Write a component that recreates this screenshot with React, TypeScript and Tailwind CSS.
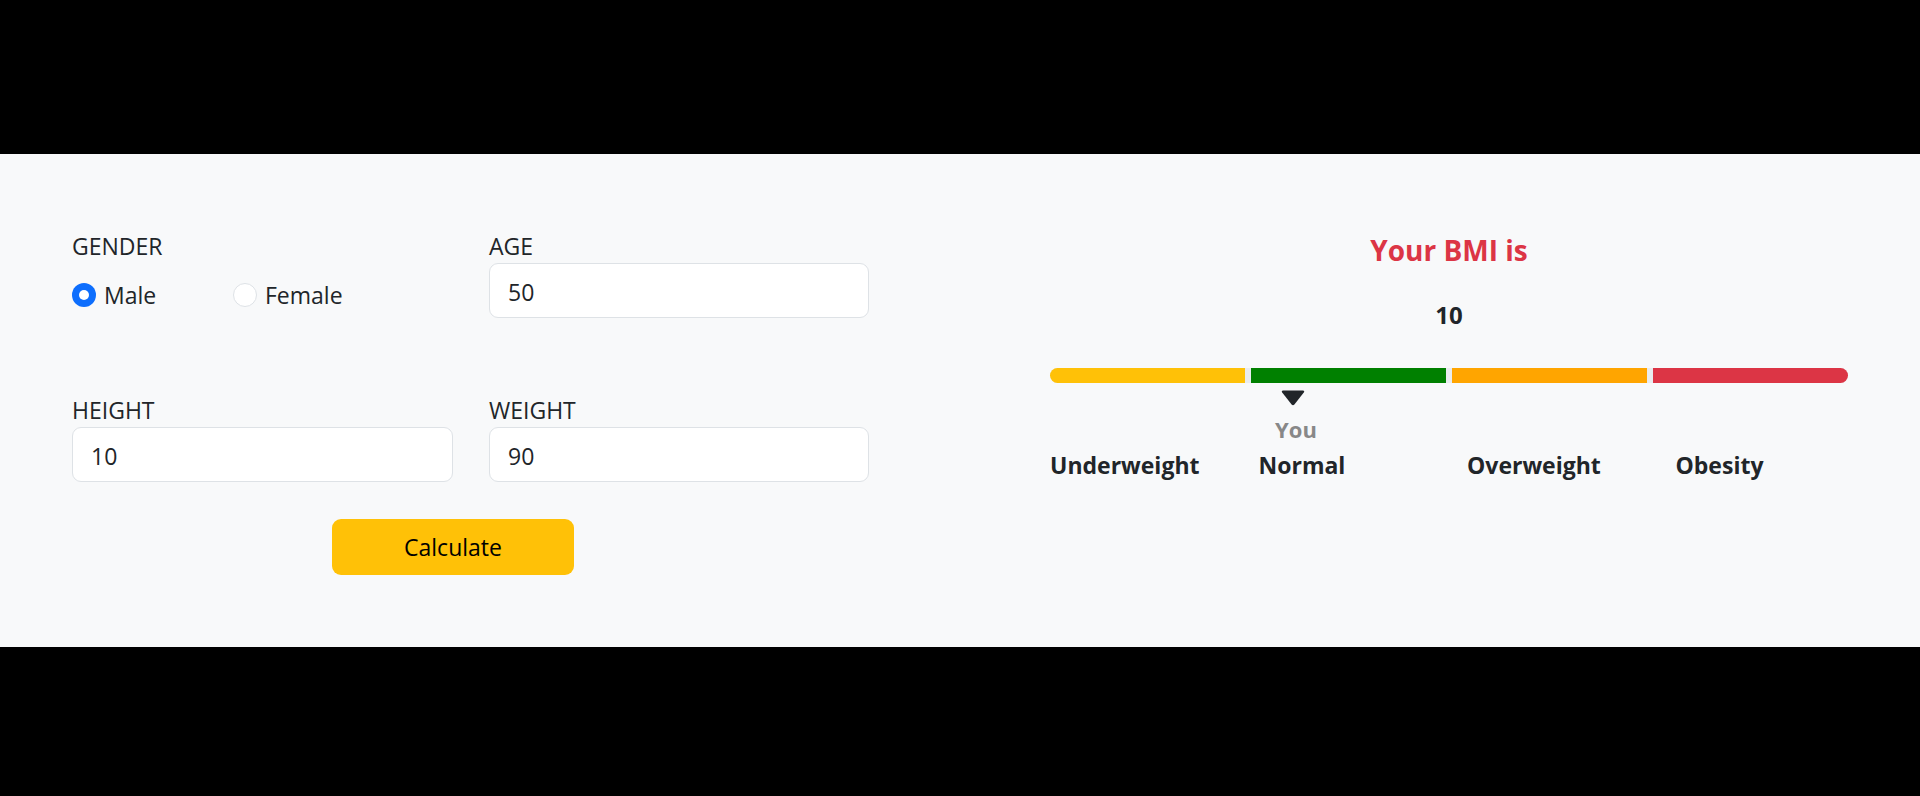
import { useState } from "react";

const SEGMENTS = [
  { key: "under", color: "bg-[#ffc107]", round: "rounded-l-full" },
  { key: "normal", color: "bg-[#008000]", round: "" },
  { key: "over", color: "bg-[#ffa500]", round: "" },
  { key: "obese", color: "bg-[#dc3545]", round: "rounded-r-full" },
];

const LABELS = ["Underweight", "Normal", "Overweight", "Obesity"];

function Radio({ checked, label, onSelect }: { checked: boolean; label: string; onSelect: () => void }) {
  return (
    <button type="button" onClick={onSelect} className="flex items-center gap-2 cursor-pointer">
      {checked ? (
        <span className="w-6 h-6 rounded-full bg-[#0d6efd] flex items-center justify-center">
          <span className="w-[10px] h-[10px] rounded-full bg-white" />
        </span>
      ) : (
        <span className="w-6 h-6 rounded-full bg-white border border-[#dee2e6]" />
      )}
      <span className="text-[23px] leading-[28px]">{label}</span>
    </button>
  );
}

function Field({ label, value, onChange }: { label: string; value: string; onChange: (v: string) => void }) {
  return (
    <div className="flex flex-col">
      <label className="text-[23px] leading-[28px]">{label}</label>
      <input
        value={value}
        onChange={(e) => onChange(e.target.value)}
        className="mt-[3px] h-[55px] w-full rounded-[9px] border border-[#dee2e6] bg-white px-[18px] pt-[2px] text-[23px] leading-[28px] text-[#212529] outline-none"
      />
    </div>
  );
}

export default function App() {
  const [gender, setGender] = useState<"male" | "female">("male");
  const [age, setAge] = useState("50");
  const [height, setHeight] = useState("10");
  const [weight, setWeight] = useState("90");

  return (
    <div
      className="h-[796px] bg-black pt-[154px] text-[#212529]"
      style={{ fontFamily: '"Open Sans", "Noto Sans", sans-serif' }}
    >
      <div className="bg-[#f8f9fa] px-[72px] pt-[78px] pb-[72px] flex justify-between items-start">
        {/* Form */}
        <div className="w-[797px]">
          <div className="grid grid-cols-[381px_380px] gap-x-[36px] gap-y-[78px]">
            <div className="flex flex-col">
              <span className="text-[23px] leading-[28px]">GENDER</span>
              <div className="mt-[21px] flex items-center">
                <div className="w-[161px]">
                  <Radio checked={gender === "male"} label="Male" onSelect={() => setGender("male")} />
                </div>
                <Radio checked={gender === "female"} label="Female" onSelect={() => setGender("female")} />
              </div>
            </div>
            <Field label="AGE" value={age} onChange={setAge} />
            <Field label="HEIGHT" value={height} onChange={setHeight} />
            <Field label="WEIGHT" value={weight} onChange={setWeight} />
          </div>
          <button
            type="button"
            className="mt-[37px] ml-[260px] h-[56px] w-[242px] rounded-[9px] bg-[#ffc107] text-[23px] leading-[28px] text-black cursor-pointer"
          >
            Calculate
          </button>
        </div>

        {/* Result */}
        <div className="w-[798px] mt-[1px] flex flex-col">
          <h3 className="text-center text-[28px] leading-[34px] font-bold text-[#dc3545]">Your BMI is</h3>
          <p className="mt-[34px] text-center text-[24px] leading-[28px] font-bold">10</p>
          <div className="mt-[39px] flex gap-[6px] h-[15px] rounded-full bg-[#e9ecef]">
            {SEGMENTS.map((s) => (
              <div key={s.key} className={`flex-1 ${s.color} ${s.round}`} />
            ))}
          </div>
          <div className="mt-[6px] ml-[213px] w-[60px] flex flex-col items-center">
            <svg width="26" height="17" viewBox="0 0 26 17">
              <path d="M3 1.5 H23 Q25 1.5 23.8 3.4 L14.4 15.4 Q13 17 11.6 15.4 L2.2 3.4 Q1 1.5 3 1.5 Z" fill="#212529" />
            </svg>
            <span className="mt-[9px] ml-[6px] text-[22px] leading-[28px] font-bold text-[#888888]">You</span>
          </div>
          <div className="mt-[8px] flex">
            {LABELS.map((l) => (
              <span key={l} className="w-[208.5px] shrink-0 text-[23px] leading-[28px] font-bold">
                {l}
              </span>
            ))}
          </div>
        </div>
      </div>
    </div>
  );
}
